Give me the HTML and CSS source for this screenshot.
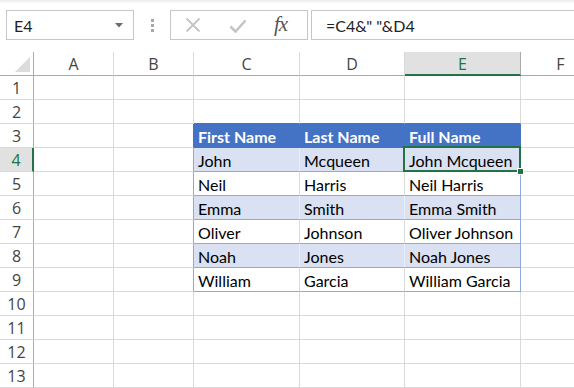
FILE: index.html
```html
<!DOCTYPE html>
<html>
<head>
<meta charset="utf-8">
<link rel="stylesheet" href="styles.css">
</head>
<body>
<div class="app">
  <div class="fbar">
    <div class="namebox">
      <span class="nb-text">E4</span>
      <svg class="caret" width="8" height="5" viewBox="0 0 8 5"><path d="M0 0H8L4 4.5Z" fill="#6b6b6b"/></svg>
    </div>
    <div class="grip">
      <span class="dot"></span><span class="dot"></span><span class="dot"></span>
    </div>
    <div class="fxbox">
      <svg class="ico-x" width="16" height="16" viewBox="0 0 16 16"><path d="M1.5 1.5L14.5 14.5M14.5 1.5L1.5 14.5" stroke="#c4c4c4" stroke-width="1.8" fill="none"/></svg>
      <svg class="ico-ok" width="18" height="14" viewBox="0 0 18 14"><path d="M1.5 7.5L6.5 12.5L16.5 1.5" stroke="#c4c4c4" stroke-width="2.6" fill="none"/></svg>
      <span class="fx">fx</span>
    </div>
    <div class="formula">=C4&amp;" "&amp;D4</div>
  </div>

  <div class="sheet">
    <div class="corner"><span class="tri"></span></div>
    <div class="ch">A</div><div class="ch">B</div><div class="ch">C</div><div class="ch">D</div><div class="ch ch-sel">E</div><div class="ch ch-last">F</div>

    <div class="rh">1</div><div class="c"></div><div class="c"></div><div class="c"></div><div class="c"></div><div class="c"></div><div class="c"></div>
    <div class="rh">2</div><div class="c"></div><div class="c"></div><div class="c top"></div><div class="c top"></div><div class="c top"></div><div class="c"></div>

    <div class="rh">3</div><div class="c"></div><div class="c b-head"></div><div class="c th">First Name</div><div class="c th">Last Name</div><div class="c th">Full Name</div><div class="c"></div>

    <div class="rh rh-sel">4</div><div class="c"></div><div class="c edge"></div><div class="c t band">John</div><div class="c t band">Mcqueen</div><div class="c t tr band sel">John Mcqueen</div><div class="c"></div>
    <div class="rh">5</div><div class="c"></div><div class="c edge"></div><div class="c t">Neil</div><div class="c t">Harris</div><div class="c t tr">Neil Harris</div><div class="c"></div>
    <div class="rh">6</div><div class="c"></div><div class="c edge"></div><div class="c t band">Emma</div><div class="c t band">Smith</div><div class="c t tr band">Emma Smith</div><div class="c"></div>
    <div class="rh">7</div><div class="c"></div><div class="c edge"></div><div class="c t">Oliver</div><div class="c t">Johnson</div><div class="c t tr">Oliver Johnson</div><div class="c"></div>
    <div class="rh">8</div><div class="c"></div><div class="c edge"></div><div class="c t band">Noah</div><div class="c t band">Jones</div><div class="c t tr band">Noah Jones</div><div class="c"></div>
    <div class="rh">9</div><div class="c"></div><div class="c edge"></div><div class="c t">William</div><div class="c t">Garcia</div><div class="c t tr">William Garcia</div><div class="c"></div>

    <div class="rh">10</div><div class="c"></div><div class="c"></div><div class="c"></div><div class="c"></div><div class="c"></div><div class="c"></div>
    <div class="rh">11</div><div class="c"></div><div class="c"></div><div class="c"></div><div class="c"></div><div class="c"></div><div class="c"></div>
    <div class="rh">12</div><div class="c"></div><div class="c"></div><div class="c"></div><div class="c"></div><div class="c"></div><div class="c"></div>
    <div class="rh">13</div><div class="c"></div><div class="c"></div><div class="c"></div><div class="c"></div><div class="c"></div><div class="c"></div>
  </div>
</div>
</body>
</html>
```

FILE: styles.css
```css
html, body {
  margin: 0;
  padding: 0;
  background: #ffffff;
  overflow: hidden;
}
.app {
  width: 574px;
  height: 388px;
  overflow: hidden;
  background: linear-gradient(#e9e9e9 0, #f6f6f6 2px, #ffffff 4px);
}

/* ---------- formula bar ---------- */
.fbar {
  display: flex;
  align-items: stretch;
  height: 30px;
  padding: 10px 0 0 6px;
}
.namebox {
  box-sizing: border-box;
  width: 128px;
  border: 1px solid #c6c6c6;
  background: #fff;
  display: flex;
  align-items: center;
  justify-content: space-between;
  padding: 0 10px 0 7px;
}
.nb-text {
  font-family: "Lato", "Liberation Sans", sans-serif;
  font-size: 16px;
  color: #222;
  margin-top: 1px;
}
.caret { margin-top: 1px; }
.grip {
  width: 36px;
  display: flex;
  flex-direction: column;
  align-items: center;
  justify-content: center;
  gap: 2px;
  padding-top: 1px;
}
.dot {
  width: 3px;
  height: 3px;
  background: #a8a8a8;
}
.fxbox {
  box-sizing: border-box;
  width: 138px;
  border: 1px solid #c6c6c6;
  background: #fff;
  display: flex;
  align-items: center;
  padding: 0 0 0 14px;
}
.ico-x { margin-right: 28px; }
.ico-ok { margin-right: 27px; margin-top: 1px; }
.fx {
  font-family: "Liberation Serif", "DejaVu Serif", serif;
  font-style: italic;
  font-size: 21px;
  color: #555;
  letter-spacing: -1px;
  margin-top: -2px;
}
.formula {
  box-sizing: border-box;
  flex: 1;
  margin-left: 3px;
  margin-right: -10px;
  border: 1px solid #c6c6c6;
  background: #fff;
  display: flex;
  align-items: center;
  padding-left: 14px;
  font-family: "Lato", "Liberation Sans", sans-serif;
  font-size: 16px;
  color: #222;
}

/* ---------- sheet ---------- */
.sheet {
  margin-top: 12px;
  display: grid;
  grid-template-columns: 34px 80px 80px 106px 105px 116px 80px;
  grid-template-rows: repeat(14, 24px);
}
.sheet > div {
  box-sizing: border-box;
  border-right: 1px solid #d9d9d9;
  border-bottom: 1px solid #d9d9d9;
}
.corner {
  position: relative;
  border-right-color: #ababab !important;
  border-bottom-color: #ababab !important;
}
.tri {
  position: absolute;
  right: 3px;
  bottom: 3px;
  width: 15px;
  height: 15px;
  background: #dcdcdc;
  clip-path: polygon(100% 0, 100% 100%, 0 100%);
}
.ch {
  border-bottom-color: #ababab !important;
  border-right-color: #dadada;
  display: flex;
  align-items: center;
  justify-content: center;
  font-family: "Open Sans", "Noto Sans", sans-serif;
  font-size: 16px;
  color: #444;
  padding-top: 1px;
}
.ch-sel {
  background: #e1e1e1;
  color: #217346;
  border-bottom: 2px solid #217346 !important;
  border-right-color: #ababab !important;
}
.rh {
  border-right-color: #ababab !important;
  display: flex;
  align-items: center;
  justify-content: center;
  font-family: "Open Sans", "Noto Sans", sans-serif;
  font-size: 16px;
  color: #444;
  padding-top: 1px;
}
.rh-sel {
  background: #e1e1e1;
  color: #217346;
  border-right: 2px solid #217346 !important;
}

.c {
  font-family: "Lato", "Liberation Sans", sans-serif;
  font-size: 16px;
  color: #000;
  display: flex;
  align-items: center;
  padding: 1px 0 0 4px;
  white-space: nowrap;
}
.top { border-bottom-color: #4472c4 !important; }
.b-head { border-right-color: #4472c4 !important; }
.edge { border-right-color: #8ea9db !important; }
.th {
  background: #4472c4;
  color: #fff;
  font-weight: 700;
  border-right-color: #4472c4 !important;
  border-bottom-color: #4472c4 !important;
}
.t {
  border-bottom-color: #8ea9db !important;
  border-right-color: #d4d4d4;
}
.tr { border-right-color: #8ea9db !important; }
.band { background: #d9e1f2; }
.band.t:not(.tr) { border-right-color: #e9eef8; }

.sel { position: relative; }
.sel::after {
  content: "";
  position: absolute;
  top: -2px;
  left: -2px;
  right: -1px;
  bottom: -1px;
  border: 2px solid #217346;
  pointer-events: none;
}
.sel::before {
  content: "";
  position: absolute;
  right: -4px;
  bottom: -4px;
  width: 5px;
  height: 5px;
  background: #217346;
  border: 1px solid #fff;
  z-index: 2;
}
```
